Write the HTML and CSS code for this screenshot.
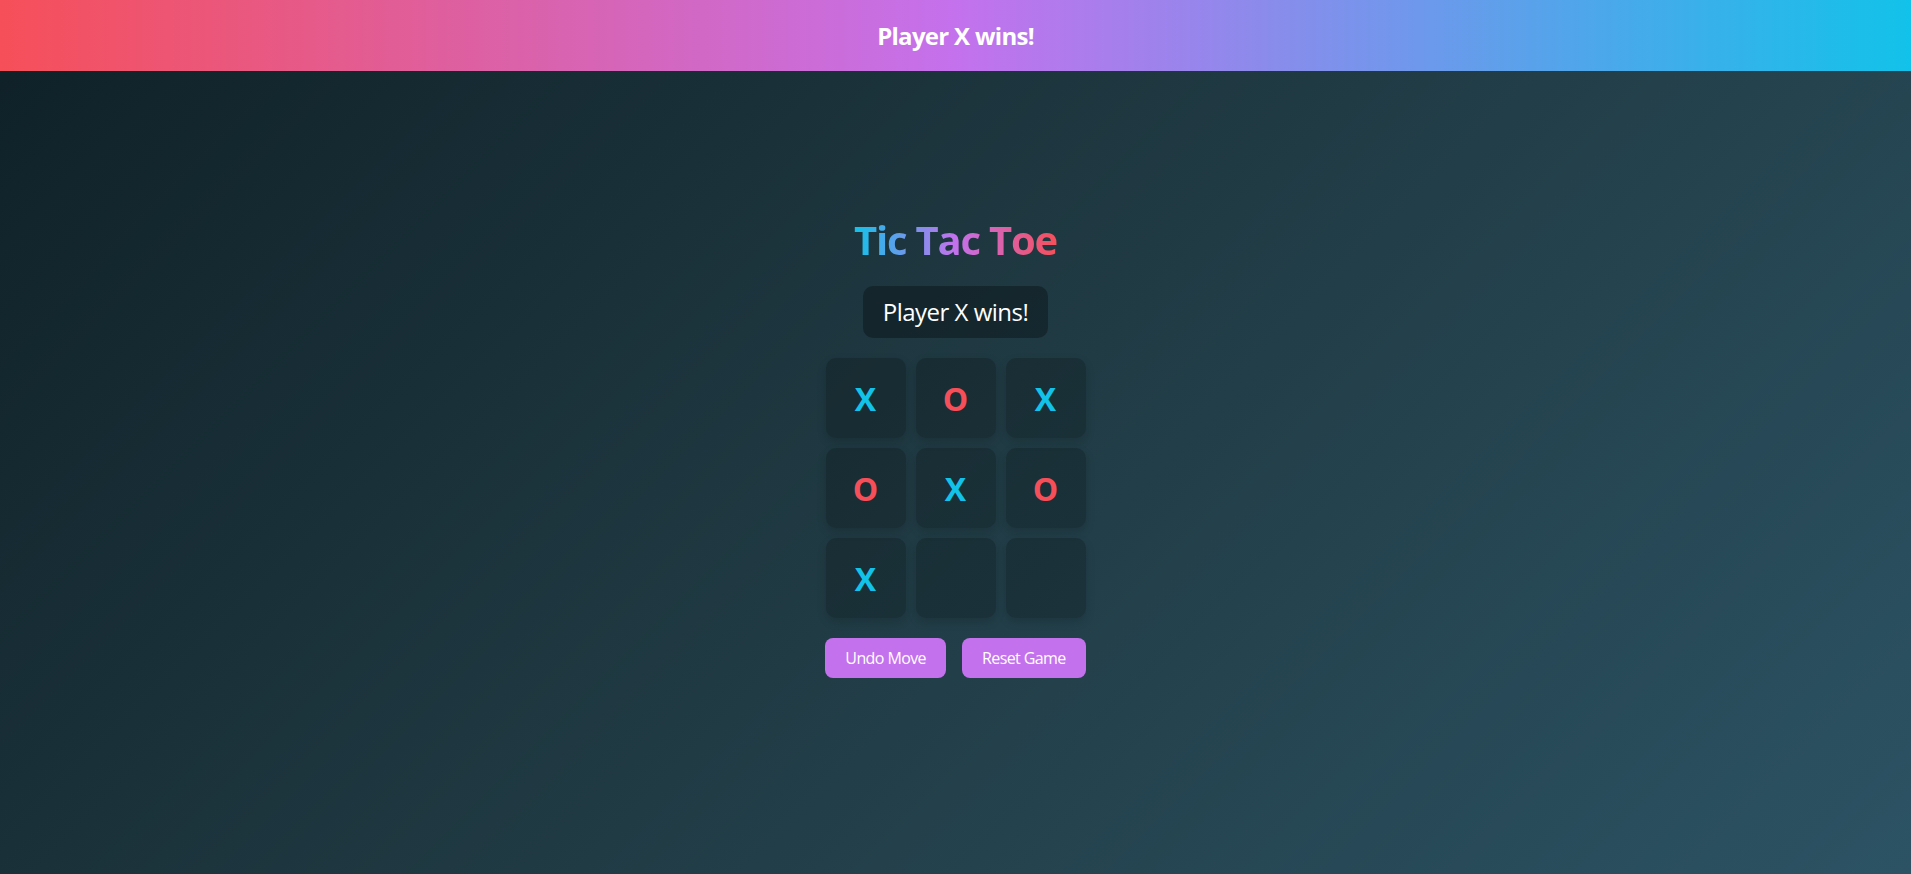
FILE: index.html
```html
<!DOCTYPE html>
<html lang="en">
<head>
<meta charset="utf-8">
<title>Tic Tac Toe</title>
<link rel="stylesheet" href="styles.css">
</head>
<body>
<div class="banner">Player X wins!</div>
<main class="game">
  <h1 class="title">Tic Tac Toe</h1>
  <div class="status">Player X wins!</div>
  <div class="board">
    <div class="cell x">X</div>
    <div class="cell o">O</div>
    <div class="cell x">X</div>
    <div class="cell o">O</div>
    <div class="cell x">X</div>
    <div class="cell o">O</div>
    <div class="cell x">X</div>
    <div class="cell"></div>
    <div class="cell"></div>
  </div>
  <div class="controls">
    <button class="btn">Undo Move</button>
    <button class="btn">Reset Game</button>
  </div>
</main>
</body>
</html>
```

FILE: styles.css
```css
* { box-sizing: border-box; }
html, body { margin: 0; padding: 0; }
body {
  font-family: "Open Sans", "Noto Sans", sans-serif;
  color: #fff;
  min-height: 100vh;
  background: linear-gradient(135deg, #0f2027 0%, #203a43 50%, #2c5364 100%);
}
.banner {
  position: fixed;
  top: 0;
  left: 0;
  right: 0;
  height: 71px;
  display: flex;
  align-items: center;
  justify-content: center;
  font-size: 24px;
  font-weight: 700;
  letter-spacing: -0.7px;
  background: linear-gradient(to right, #f64f59, #c471ed, #12c2e9);
}
.game {
  min-height: 100vh;
  padding-top: 20px;
  display: flex;
  flex-direction: column;
  align-items: center;
  justify-content: center;
}
.title {
  margin: 0 0 22px;
  font-size: 40px;
  line-height: 48px;
  font-weight: 700;
  letter-spacing: -1.2px;
  background: linear-gradient(to right, #12c2e9, #c471ed, #f64f59);
  -webkit-background-clip: text;
  background-clip: text;
  color: transparent;
}
.status {
  font-size: 24px;
  line-height: 32px;
  letter-spacing: -0.5px;
  padding: 10px 20px;
  border-radius: 10px;
  background: rgba(0, 0, 0, 0.3);
  margin-bottom: 20px;
}
.board {
  display: grid;
  grid-template-columns: repeat(3, 80px);
  grid-auto-rows: 80px;
  gap: 10px;
}
.cell {
  border-radius: 10px;
  background: rgba(0, 0, 0, 0.2);
  box-shadow: 0 4px 10px rgba(0, 0, 0, 0.15);
  display: flex;
  align-items: center;
  justify-content: center;
  font-size: 32px;
  font-weight: 700;
}
.cell.x { color: #12c2e9; }
.cell.o { color: #f64f59; }
.controls {
  margin-top: 20px;
  display: flex;
  gap: 16px;
}
.btn {
  font-family: inherit;
  font-size: 16px;
  line-height: 20px;
  letter-spacing: -0.6px;
  padding: 10px 20px;
  border: none;
  border-radius: 8px;
  background: #c471ed;
  color: #fff;
}
```
